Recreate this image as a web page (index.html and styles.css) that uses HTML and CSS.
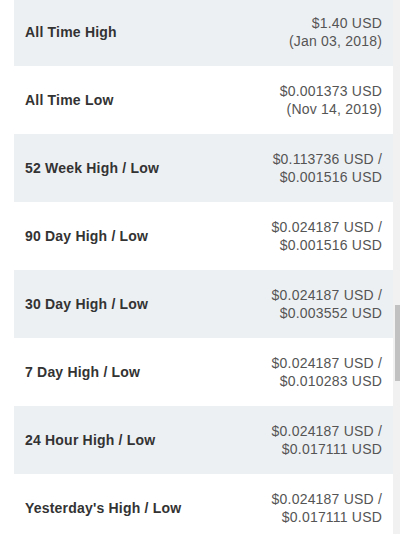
FILE: index.html
```html
<!DOCTYPE html>
<html>
<head>
<meta charset="utf-8">
<link rel="stylesheet" href="styles.css">
</head>
<body>
<div class="page">
  <div class="table">
    <div class="row alt"><div class="label">All Time High</div><div class="value">$1.40 USD<br>(Jan 03, 2018)</div></div>
    <div class="row"><div class="label">All Time Low</div><div class="value">$0.001373 USD<br>(Nov 14, 2019)</div></div>
    <div class="row alt"><div class="label">52 Week High / Low</div><div class="value">$0.113736 USD /<br>$0.001516 USD</div></div>
    <div class="row"><div class="label">90 Day High / Low</div><div class="value">$0.024187 USD /<br>$0.001516 USD</div></div>
    <div class="row alt"><div class="label">30 Day High / Low</div><div class="value">$0.024187 USD /<br>$0.003552 USD</div></div>
    <div class="row"><div class="label">7 Day High / Low</div><div class="value">$0.024187 USD /<br>$0.010283 USD</div></div>
    <div class="row alt"><div class="label">24 Hour High / Low</div><div class="value">$0.024187 USD /<br>$0.017111 USD</div></div>
    <div class="row"><div class="label">Yesterday's High / Low</div><div class="value">$0.024187 USD /<br>$0.017111 USD</div></div>
  </div>
  <div class="scrollbar"><div class="thumb"></div></div>
</div>
</body>
</html>
```
FILE: styles.css
```css
html, body {
  margin: 0;
  padding: 0;
  background: #fff;
  overflow: hidden;
}
body {
  font-family: "Liberation Sans", Arial, sans-serif;
  font-size: 14px;
  letter-spacing: 0.2px;
}
.page {
  display: flex;
  height: 534px;
  overflow: hidden;
}
.table {
  flex: 1;
  margin-left: 14px;
  margin-top: -2px;
}
.row {
  height: 68px;
  display: flex;
  align-items: center;
  justify-content: space-between;
  padding: 0 11px;
  background: #fff;
}
.row.alt {
  background: #edf0f3;
}
.label {
  font-weight: bold;
  color: #333;
}
.value {
  text-align: right;
  color: #555;
  line-height: 18px;
}
.scrollbar {
  width: 7px;
  background: #f1f1f1;
  padding-top: 305px;
  box-sizing: border-box;
  display: flex;
  justify-content: flex-end;
  align-items: flex-start;
}
.thumb {
  width: 5px;
  height: 76px;
  background: #c1c1c1;
}
```
